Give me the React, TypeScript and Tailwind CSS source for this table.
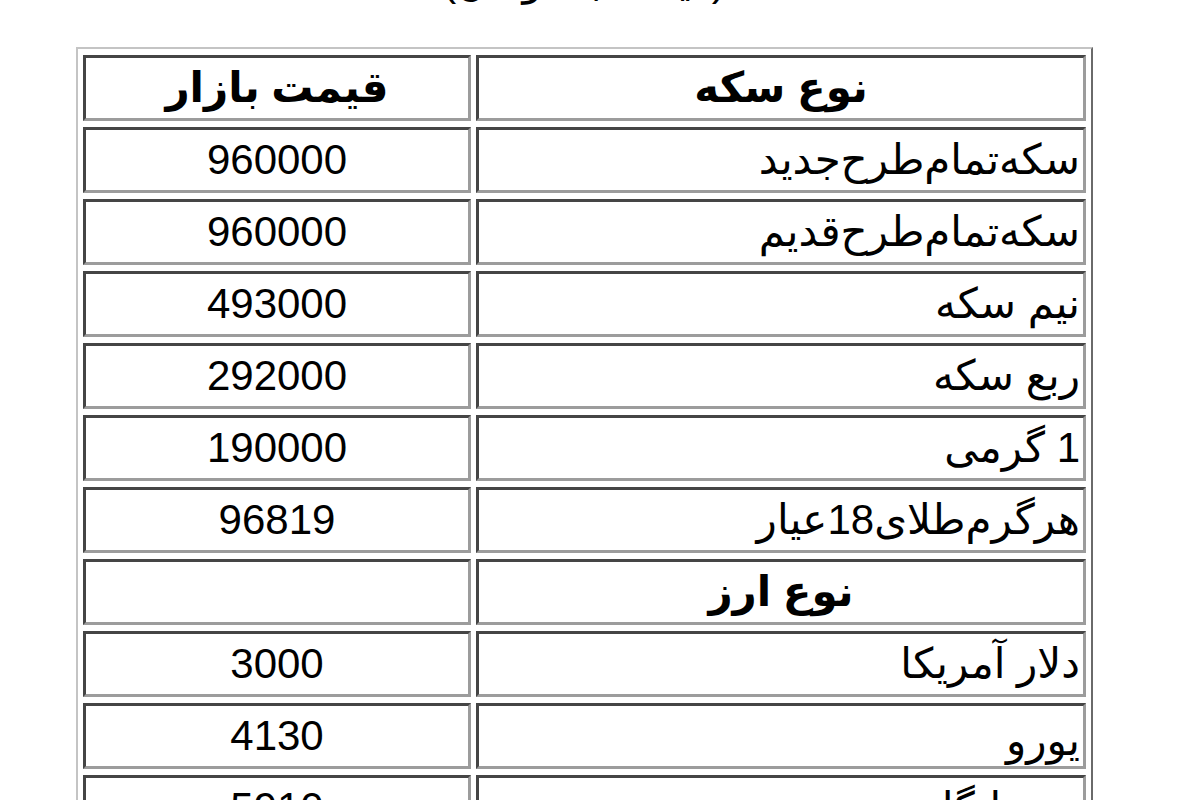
import React from "react";

type Row = { name: string; price: string; bold?: boolean; low?: boolean };

// جدول قیمت سکه و ارز
const rows: Row[] = [
  { name: "نوع سکه", price: "قیمت بازار", bold: true },
  { name: "سکه\u200cتمام\u200cطرح\u200cجدید", price: "960000" },
  { name: "سکه\u200cتمام\u200cطرح\u200cقدیم", price: "960000" },
  { name: "نیم سکه", price: "493000" },
  { name: "ربع سکه", price: "292000" },
  { name: "1 گرمی", price: "190000" },
  { name: "هرگرم\u200cطلای18عیار", price: "96819" },
  { name: "نوع ارز", price: "", bold: true },
  { name: "دلار آمریکا", price: "3000" },
  { name: "یورو", price: "4130", low: true },
  { name: "پوند انگلیس", price: "5910" },
];

const cell =
  "h-[66px] p-[3px] border-[3px] border-t-[#454545] border-l-[#454545] border-b-[#9c9c9c] border-r-[#9c9c9c]";

export default function App() {
  return (
    <div className="h-screen overflow-hidden bg-white text-black font-['Liberation_Sans','DejaVu_Sans',sans-serif] text-[42px] leading-[1.2]">
      {/* عنوان بالای جدول - فقط پایینش دیده میشه */}
      <div dir="rtl" className="ml-[76px] w-[1016px] -mt-[44px] h-[91px] text-center">
        (قیمت به تومان)
      </div>

      <table
        dir="rtl"
        className="ml-[76px] w-[1017px] border-separate border-spacing-x-[5px] border-spacing-y-[6px] border-[2px] border-t-[#c4c4c4] border-l-[#c4c4c4] border-b-[#6a6a6a] border-r-[#6a6a6a]"
      >
        <tbody>
          {rows.map((r, i) => (
            <tr key={i}>
              <td
                className={`${cell} w-[610px] ${r.bold ? "text-center font-bold" : "text-right"} ${
                  r.low ? "align-bottom pb-0" : "align-middle"
                }`}
              >
                {r.name}
              </td>
              <td className={`${cell} w-[388px] text-center align-middle ${r.bold ? "font-bold" : ""}`}>
                {r.price}
              </td>
            </tr>
          ))}
        </tbody>
      </table>
    </div>
  );
}
